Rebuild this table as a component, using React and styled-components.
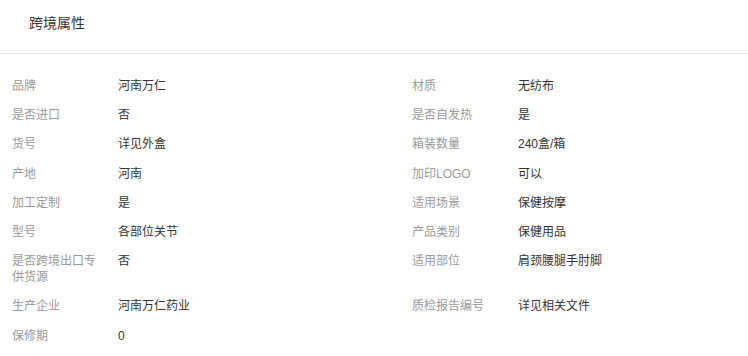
import React from 'react';
import styled, { createGlobalStyle } from 'styled-components';

const GlobalStyle = createGlobalStyle`
  body {
    margin: 0;
    background: #fff;
    font-family: "Liberation Sans", "Noto Sans CJK SC", sans-serif;
    color: #333;
  }
`;

const Panel = styled.section`
  width: 748px;
  background: #fff;
`;

const Header = styled.div`
  height: 53px;
  display: flex;
  align-items: center;
  padding: 0 29px;
  border-bottom: 1px solid #e8e8e8;
`;

const Title = styled.h3`
  margin: 0;
  font-size: 14px;
  font-weight: normal;
  color: #333;
  line-height: 20px;
  padding-bottom: 8px;
`;

const Attrs = styled.div`
  display: grid;
  grid-template-columns: 400px 1fr;
  row-gap: 13.2px;
  padding: 24px 12px 16px;
`;

const Item = styled.div`
  display: flex;
  font-size: 12px;
  line-height: 16px;
`;

const Label = styled.span`
  flex: 0 0 106px;
  box-sizing: border-box;
  padding-right: 18px;
  color: #999;
`;

const Value = styled.span`
  flex: 1;
  color: #333;
`;

const attrs = [
  ['品牌', '河南万仁'],
  ['材质', '无纺布'],
  ['是否进口', '否'],
  ['是否自发热', '是'],
  ['货号', '详见外盒'],
  ['箱装数量', '240盒/箱'],
  ['产地', '河南'],
  ['加印LOGO', '可以'],
  ['加工定制', '是'],
  ['适用场景', '保健按摩'],
  ['型号', '各部位关节'],
  ['产品类别', '保健用品'],
  ['是否跨境出口专供货源', '否'],
  ['适用部位', '肩颈腰腿手肘脚'],
  ['生产企业', '河南万仁药业'],
  ['质检报告编号', '详见相关文件'],
  ['保修期', '0'],
];

export default function App() {
  return (
    <>
      <GlobalStyle />
      <Panel>
        <Header>
          <Title>跨境属性</Title>
        </Header>
        <Attrs>
          {attrs.map(([label, value]) => (
            <Item key={label}>
              <Label>{label}</Label>
              <Value>{value}</Value>
            </Item>
          ))}
        </Attrs>
      </Panel>
    </>
  );
}
